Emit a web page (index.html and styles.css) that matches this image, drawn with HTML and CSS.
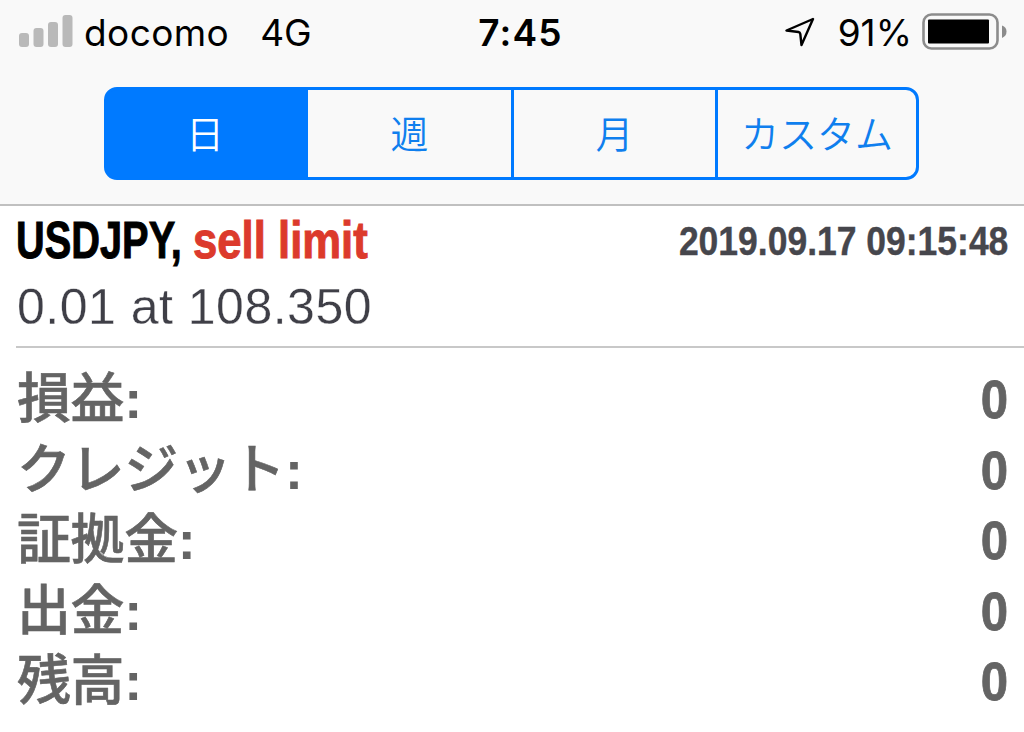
FILE: index.html
```
<!DOCTYPE html>
<html lang="ja">
<head>
    <meta charset="UTF-8">
    <meta name="viewport" content="width=device-width, initial-scale=1.0">
    <title>履歴</title>
    <link rel="stylesheet" href="styles.css">
</head>
<body>
    <header class="header">
        <div class="status-bar">
            <div class="status-left">
                <svg class="signal" width="54" height="32" viewBox="0 0 54 32" fill="#b9b9b9">
                    <rect x="0" y="18" width="10" height="14" rx="3"/>
                    <rect x="14.5" y="13" width="10" height="19" rx="3"/>
                    <rect x="29" y="7" width="10" height="25" rx="3"/>
                    <rect x="43.5" y="0" width="10" height="32" rx="3"/>
                </svg>
                <span class="carrier">docomo</span>
                <span class="network">4G</span>
            </div>
            <div class="clock">7:45</div>
            <div class="status-right">
                <svg class="location" width="30" height="30" viewBox="0 0 30 30" fill="none" stroke="#000" stroke-width="2.4" stroke-linejoin="round">
                    <path d="M28 2 L1.500 13.500 L13.500 15 Q15 15.300 15.300 17 L16.500 28 Z"/>
                </svg>
                <span class="percent">91%</span>
                <svg class="battery" width="86" height="37" viewBox="0 0 86 37">
                    <rect x="1.5" y="1.5" width="74" height="34" rx="8" fill="none" stroke="#8c8c8c" stroke-width="2.6"/>
                    <rect x="6" y="6.5" width="61" height="24" rx="1" fill="#000"/>
                    <path d="M80 12.500 Q84.500 14 84.500 18.500 Q84.500 23 80 25 Z" fill="#8c8c8c"/>
                </svg>
            </div>
        </div>
        <nav class="segments">
            <a class="segment active">日</a>
            <a class="segment">週</a>
            <a class="segment">月</a>
            <a class="segment">カスタム</a>
        </nav>
    </header>

    <main>
        <section class="order">
            <div class="order-title">
                <span class="symbol">USDJPY,</span>
                <span class="type">sell limit</span>
                <span class="date">2019.09.17 09:15:48</span>
            </div>
            <div class="volume">0.01 at 108.350</div>
        </section>

        <section class="summary">
            <div class="row"><span class="label">損益<b>:</b></span><span class="value">0</span></div>
            <div class="row"><span class="label">クレジット<b>:</b></span><span class="value">0</span></div>
            <div class="row"><span class="label">証拠金<b>:</b></span><span class="value">0</span></div>
            <div class="row"><span class="label">出金<b>:</b></span><span class="value">0</span></div>
            <div class="row"><span class="label">残高<b>:</b></span><span class="value">0</span></div>
        </section>
    </main>
</body>
</html>
```

FILE: styles.css
```
* {
    box-sizing: border-box;
}
body {
    margin: 0;
    background: #fff;
    color: #000;
    font-family: "Liberation Sans", "Noto Sans CJK JP", sans-serif;
    overflow: hidden;
}

/* status bar */
.header {
    height: 206px;
    background: #f9f9f9;
    border-bottom: 2px solid #c0c0c0;
}
.status-bar {
    display: grid;
    grid-template-columns: 1fr 120px 1fr;
    height: 64px;
    padding: 0 16px 0 19px;
    font-family: Inter, sans-serif;
    font-size: 37px;
    line-height: 65px;
    white-space: nowrap;
}
.status-left,
.status-right {
    display: flex;
}
.status-right {
    justify-content: flex-end;
}
.signal {
    margin-top: 15px;
}
.carrier {
    margin-left: 11px;
    letter-spacing: 0.4px;
}
.network {
    margin-left: 31px;
}
.clock {
    padding-left: 14px;
    text-align: center;
    font-weight: 600;
    letter-spacing: 1.2px;
}
.location {
    margin-top: 17px;
}
.percent {
    margin-left: 23px;
}
.battery {
    margin-top: 13px;
    margin-left: 10px;
}

/* period switch */
.segments {
    display: grid;
    grid-template-columns: 201px 206px 204px 1fr;
    width: 815px;
    height: 93px;
    margin: 23px 0 0 104px;
    border: 3px solid #007aff;
    border-radius: 13px;
    background: linear-gradient(90deg, #007aff 50px, #f9f9f9 50px);
    overflow: hidden;
}
.segment {
    border-right: 3px solid #007aff;
    color: #0f7fee;
    font-family: "Noto Sans CJK JP", sans-serif;
    font-size: 38px;
    font-weight: 350;
    line-height: 83px;
    text-align: center;
}
.segment:last-child {
    border-right: none;
}
.segment.active {
    padding-right: 5px;
    border-right: none;
    background: #007aff;
    color: #fff;
}

/* order */
.order {
    height: 142px;
    margin-left: 16px;
    border-bottom: 2px solid #c8c8c8;
}
.order-title {
    display: flex;
    height: 70px;
    padding-right: 16px;
    font-weight: bold;
    font-size: 52px;
    line-height: 69px;
    white-space: nowrap;
}
.symbol,
.type {
    transform-origin: left;
    -webkit-text-stroke: 1px currentColor;
}
.symbol {
    width: 177px;
    transform: scaleX(0.765);
}
.type {
    color: #dc3a2c;
    transform: scaleX(0.84);
}
.date {
    margin-left: auto;
    color: #46464c;
    font-size: 41.5px;
    transform: scaleX(0.855);
    transform-origin: right;
    -webkit-text-stroke: 0.4px currentColor;
}
.volume {
    padding-left: 1px;
    color: #3f3f47;
    font-size: 50px;
    line-height: 62px;
    letter-spacing: 0.5px;
    -webkit-text-stroke: 0.3px #fff;
}

/* totals */
.summary {
    padding: 16px 16px 0 17px;
}
.row {
    display: flex;
    justify-content: space-between;
    height: 70.5px;
    color: #646464;
    font-weight: bold;
    font-size: 54px;
    line-height: 70px;
    white-space: nowrap;
}
.label {
    font-weight: 500;
    letter-spacing: -0.4px;
    -webkit-text-stroke: 0.6px currentColor;
}
.label b {
    -webkit-text-stroke: 0;
}
.value {
    transform: scaleX(0.91);
    transform-origin: right;
    -webkit-text-stroke: 0.8px currentColor;
}
```
